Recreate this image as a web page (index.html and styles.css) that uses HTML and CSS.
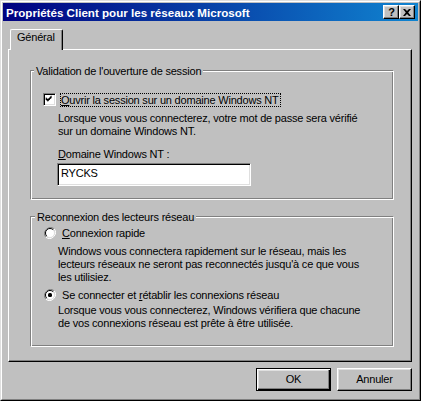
FILE: index.html
```html
<!DOCTYPE html>
<html lang="fr">
<head>
<meta charset="utf-8">
<title>Propriétés Client pour les réseaux Microsoft</title>
<link rel="stylesheet" href="styles.css">
</head>
<body>
<div class="window">
  <div class="frame">
    <div class="titlebar">
      <span class="title">Propriétés Client pour les réseaux Microsoft</span>
      <div class="tbtns">
        <span class="tbtn help">?</span>
        <span class="tbtn close"><svg width="8" height="7" viewBox="0 0 8 7"><path d="M0 0h2l2 2 2-2h2L5.2 3.5 8 7H6L4 5 2 7H0l2.8-3.5z" fill="#000"/></svg></span>
      </div>
    </div>
    <div class="content">
      <div class="tabs"><div class="tab">Général</div></div>
      <div class="panel">
        <div class="group g1">
          <span class="legend">Validation de l'ouverture de session</span>
          <div class="row">
            <span class="check"><svg width="13" height="13" viewBox="0 0 13 13"><path d="M3 5h1v3H3zM4 6h1v3H4zM5 7h1v3H5zM6 6h1v3H6zM7 5h1v3H7zM8 4h1v3H8zM9 3h1v3H9z" fill="#000"/></svg></span>
            <span class="lbl focus"><u>O</u>uvrir la session sur un domaine Windows NT</span>
          </div>
          <p class="desc d1">Lorsque vous vous connecterez, votre mot de passe sera vérifié<br>sur un domaine Windows NT.</p>
          <p class="field-label"><u>D</u>omaine Windows NT :</p>
          <div class="input">RYCKS</div>
        </div>
        <div class="group g2">
          <span class="legend">Reconnexion des lecteurs réseau</span>
          <div class="row r1">
            <span class="radio"><svg width="12" height="12" viewBox="0 0 12 12"><path d="M10.2 1.8A6 6 0 0 0 1.8 10.2" stroke="#808080" fill="none"/><path d="M10.2 1.8A6 6 0 0 1 1.8 10.2" stroke="#fff" fill="none"/><circle cx="6" cy="6" r="4.6" fill="#fff"/><path d="M9.2 2.8A4.5 4.5 0 0 0 2.8 9.2" stroke="#000" fill="none"/><path d="M9.2 2.8A4.5 4.5 0 0 1 2.8 9.2" stroke="#dfdfdf" fill="none"/></svg></span>
            <span class="lbl"><u>C</u>onnexion rapide</span>
          </div>
          <p class="desc d2">Windows vous connectera rapidement sur le réseau, mais les<br>lecteurs réseaux ne seront pas reconnectés jusqu'à ce que vous<br>les utilisiez.</p>
          <div class="row r2">
            <span class="radio"><svg width="12" height="12" viewBox="0 0 12 12"><path d="M10.2 1.8A6 6 0 0 0 1.8 10.2" stroke="#808080" fill="none"/><path d="M10.2 1.8A6 6 0 0 1 1.8 10.2" stroke="#fff" fill="none"/><circle cx="6" cy="6" r="4.6" fill="#fff"/><path d="M9.2 2.8A4.5 4.5 0 0 0 2.8 9.2" stroke="#000" fill="none"/><path d="M9.2 2.8A4.5 4.5 0 0 1 2.8 9.2" stroke="#dfdfdf" fill="none"/><rect x="4" y="4" width="4" height="4" rx="1.5" fill="#000"/></svg></span>
            <span class="lbl">Se connecter et <u>r</u>établir les connexions réseau</span>
          </div>
          <p class="desc d3">Lorsque vous vous connecterez, Windows vérifiera que chacune<br>de vos connexions réseau est prête à être utilisée.</p>
        </div>
      </div>
      <div class="buttons">
        <button class="btn default">OK</button>
        <button class="btn">Annuler</button>
      </div>
    </div>
  </div>
</div>
</body>
</html>
```

FILE: styles.css
```css
* { box-sizing: border-box; }
html, body { margin: 0; padding: 0; }
body {
  font-family: "Liberation Sans", Arial, sans-serif;
  font-size: 11px;
  line-height: 13px;
  letter-spacing: -0.2px;
  color: #000;
  background: #c0c0c0;
}
p { margin: 0; }
u { text-decoration: underline; text-underline-offset: 1px; }

.window {
  width: 421px;
  height: 401px;
  background: #c0c0c0;
  border: 1px solid;
  border-color: #dfdfdf #000 #000 #dfdfdf;
}
.frame {
  height: 100%;
  border: 1px solid;
  border-color: #fff #808080 #808080 #fff;
  padding: 1px;
  display: flex;
  flex-direction: column;
}
.titlebar {
  height: 18px;
  background: linear-gradient(to right, #000080, #1084d0);
  display: flex;
  align-items: center;
  padding: 0 3px 0 3px;
}
.title {
  flex: 1;
  color: #fff;
  font-weight: bold;
  font-size: 11.6px;
  letter-spacing: 0;
  white-space: nowrap;
}
.tbtns { display: flex; }
.tbtn {
  width: 16px;
  height: 14px;
  background: #c0c0c0;
  border: 1px solid;
  border-color: #fff #000 #000 #fff;
  box-shadow: inset -1px -1px #808080, inset 1px 1px #dfdfdf;
  display: flex;
  align-items: center;
  justify-content: center;
  font-weight: bold;
  font-size: 11px;
  line-height: 11px;
  letter-spacing: 0;
}
.tbtn.help { padding-left: 1px; }
.tbtn.close svg { display: block; }

.content {
  flex: 1;
  display: flex;
  flex-direction: column;
  padding: 8px 6px 0 5px;
}
.tabs {
  display: flex;
  padding-left: 2px;
  position: relative;
  z-index: 1;
}
.tab {
  width: 53px;
  height: 21px;
  margin-bottom: -1px;
  background: #c0c0c0;
  border-left: 1px solid #fff;
  border-top: 1px solid #fff;
  border-right: 1px solid #000;
  border-radius: 2px 2px 0 0;
  box-shadow: inset -1px 0 #808080;
  padding: 1px 0 0 6px;
}
.panel {
  width: 404px;
  height: 313px;
  border: 1px solid;
  border-color: #fff #000 #000 #fff;
  box-shadow: inset -1px -1px #808080;
  padding: 20px 0 0 21px;
}
.group {
  position: relative;
  width: 364px;
  border: 1px solid;
  border-color: #808080 #fff #fff #808080;
  box-shadow: inset 1px 1px #fff, inset -1px -1px #808080;
}
.g1 { height: 130px; padding: 22px 0 0 12px; }
.g2 { height: 131px; margin-top: 16px; padding: 10px 0 0 13px; }
.legend {
  position: absolute;
  top: -6px;
  left: 3px;
  background: #c0c0c0;
  padding: 0 2px;
  white-space: nowrap;
}
.g2 .legend { left: 4px; }

.row { display: flex; align-items: flex-start; }
.check {
  width: 13px;
  height: 13px;
  flex: none;
}
.check svg {
  display: block;
  background: #fff;
  border: 1px solid;
  border-color: #808080 #fff #fff #808080;
  box-shadow: inset 1px 1px #000, inset -1px -1px #dfdfdf;
}
.check svg path { transform: translate(-1px, -1px); }
.lbl { white-space: nowrap; }
.g1 .lbl {
  margin-left: 4px;
  border: 1px dotted #000;
  line-height: 12px;
  padding: 0 1px 0 0;
}
.radio { width: 12px; height: 12px; flex: none; }
.radio svg { display: block; }
.g2 .lbl { margin-left: 6px; }

.desc { white-space: nowrap; }
.d1 { margin: 5px 0 0 15px; }
.field-label { margin: 10px 0 0 15px; }
.input {
  width: 194px;
  height: 23px;
  margin: 2px 0 0 14px;
  background: #fff;
  border: 1px solid;
  border-color: #808080 #fff #fff #808080;
  box-shadow: inset 1px 1px #000, inset -1px -1px #dfdfdf;
  padding: 3px 0 0 3px;
}
.d2 { margin: 5px 0 0 14px; }
.r2 { margin-top: 5px; }
.d3 { margin: 2px 0 0 14px; }

.buttons {
  display: flex;
  justify-content: flex-end;
  gap: 6px;
  margin-top: 6px;
}
.btn {
  width: 75px;
  height: 23px;
  font-family: inherit;
  font-size: 11px;
  line-height: 13px;
  letter-spacing: -0.2px;
  color: #000;
  background: #c0c0c0;
  border: 1px solid;
  border-color: #fff #000 #000 #fff;
  box-shadow: inset -1px -1px #808080, inset 1px 1px #dfdfdf;
  padding: 0;
  border-radius: 0;
}
.btn.default {
  border-color: #000;
  box-shadow: inset 1px 1px #fff, inset -1px -1px #000, inset -2px -2px #808080, inset 2px 2px #dfdfdf;
}
```
